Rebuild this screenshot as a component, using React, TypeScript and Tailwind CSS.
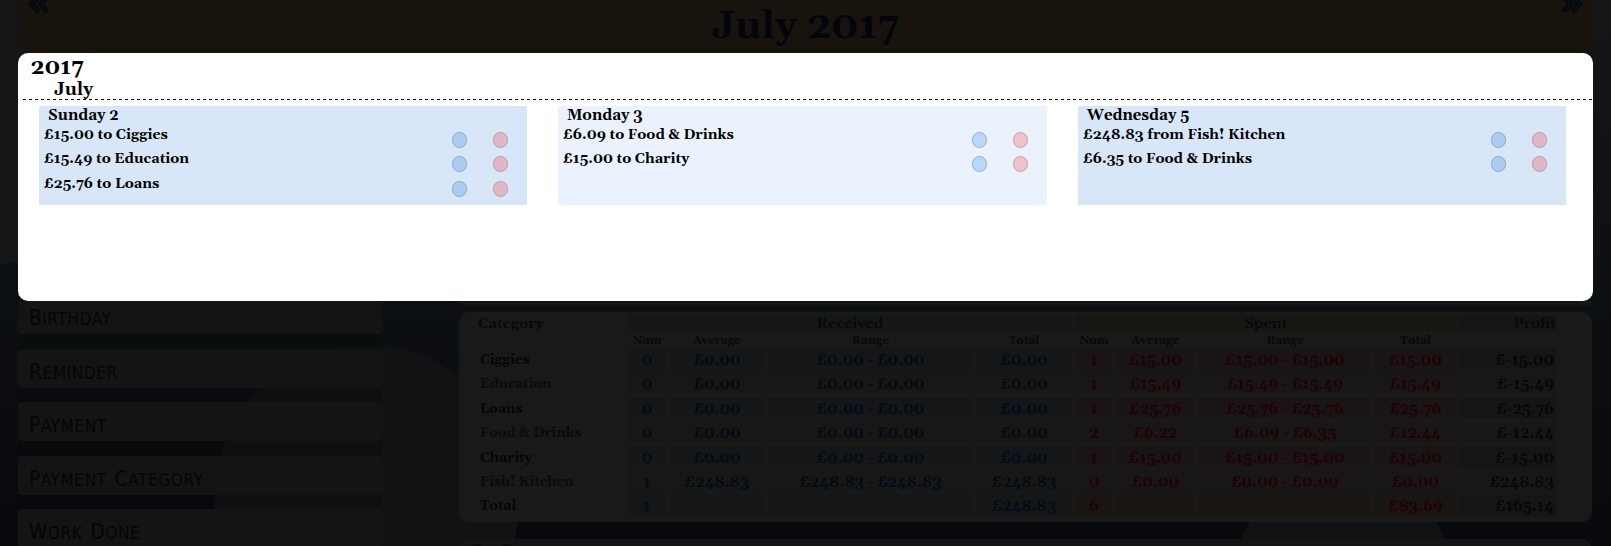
type Day = { title: string; payments: string[]; shade: string; width: string; blue: string; red: string };

const strong = {
  shade: 'bg-[#d8e7f8]',
  width: 'w-[488px]',
  blue: 'border-[#86a9cd] bg-[#accdef]',
  red: 'border-[#bd98a7] bg-[#e0b8c5]',
};
const light = {
  shade: 'bg-[#eaf3fd]',
  width: 'w-[489px]',
  blue: 'border-[#94b0cf] bg-[#bad7f5]',
  red: 'border-[#cba0a9] bg-[#efc2ca]',
};

const days: Day[] = [
  { title: 'Sunday 2', payments: ['£15.00 to Ciggies', '£15.49 to Education', '£25.76 to Loans'], ...strong },
  { title: 'Monday 3', payments: ['£6.09 to Food & Drinks', '£15.00 to Charity'], ...light },
  { title: 'Wednesday 5', payments: ['£248.83 from Fish! Kitchen', '£6.35 to Food & Drinks'], ...strong },
];

const menu = ['Birthday', 'Reminder', 'Payment', 'Payment Category', 'Work Done'];

const rows: string[][] = [
  ['Ciggies', '0', '£0.00', '£0.00 - £0.00', '£0.00', '1', '£15.00', '£15.00 - £15.00', '£15.00', '£-15.00'],
  ['Education', '0', '£0.00', '£0.00 - £0.00', '£0.00', '1', '£15.49', '£15.49 - £15.49', '£15.49', '£-15.49'],
  ['Loans', '0', '£0.00', '£0.00 - £0.00', '£0.00', '1', '£25.76', '£25.76 - £25.76', '£25.76', '£-25.76'],
  ['Food & Drinks', '0', '£0.00', '£0.00 - £0.00', '£0.00', '2', '£6.22', '£6.09 - £6.35', '£12.44', '£-12.44'],
  ['Charity', '0', '£0.00', '£0.00 - £0.00', '£0.00', '1', '£15.00', '£15.00 - £15.00', '£15.00', '£-15.00'],
  ['Fish! Kitchen', '1', '£248.83', '£248.83 - £248.83', '£248.83', '0', '£0.00', '£0.00 - £0.00', '£0.00', '£248.83'],
  ['Total', '1', '', '', '£248.83', '6', '', '', '£83.69', '£165.14'],
];

const columns = 'grid grid-cols-[169px_40px_100px_207px_100px_40px_83px_176px_85px_97px]';

function cellStyle(row: number, col: number) {
  const odd = row % 2 === 0;
  if (col <= 4) return odd ? 'bg-[#141617] text-[#020b17]' : 'bg-[#171716] text-[#020b17]';
  if (col <= 8) {
    if (row === 6) return 'bg-[#191612] text-[#1f0204]';
    return odd ? 'bg-[#191415] text-[#1f0204]' : 'bg-[#181716] text-[#1f0204]';
  }
  return odd ? 'bg-[#151515] text-[#070707]' : 'bg-[#171716] text-[#070707]';
}

function Background() {
  return (
    <svg className="absolute inset-0 h-[546px] w-[1611px]" viewBox="0 0 1611 546" aria-hidden="true">
      <circle cx="367" cy="498" r="153" fill="#111214" />
      <rect x="18" y="301" width="364" height="245" fill="#000" opacity="0.12" />
      <circle cx="1343" cy="583" r="111" fill="#101113" />
      <circle cx="-30" cy="110" r="158" fill="#151618" />
    </svg>
  );
}

function Chevrons({ flip }: { flip?: boolean }) {
  return (
    <svg
      className={`-mt-[9px] h-[22px] w-[24px] ${flip ? '-scale-x-100' : ''}`}
      viewBox="0 0 24 22"
      fill="none"
      strokeLinecap="round"
      strokeLinejoin="round"
      aria-hidden="true"
    >
      <path d="M11 6 4.500 13 10 19M20 6 13.500 13 19 19" stroke="#07080d" strokeWidth="5.500" />
      <path d="M11 6 4.500 13 10 19M20 6 13.500 13 19 19" stroke="#0a0c14" strokeWidth="2.500" />
    </svg>
  );
}

function MenuItem({ label }: { label: string }) {
  return (
    <li className="flex h-[39px] shrink-0 items-baseline gap-[8px] rounded-[4px] bg-[#131413] pl-[11px] pt-[8px] font-['DejaVu_Sans_Condensed','DejaVu_Sans',sans-serif] font-normal uppercase leading-[31px] text-[#060606]">
      {label.split(' ').map((word) => (
        <span key={word} className="text-[17.2px] tracking-[0.55px] first-letter:text-[20.5px]">
          {word}
        </span>
      ))}
    </li>
  );
}

function DayCard({ day }: { day: Day }) {
  return (
    <section className={`h-[99px] shrink-0 ${day.width} ${day.shade}`}>
      <h3 className="h-[21px] pl-[9px] pt-px text-[15px] leading-[18px]">{day.title}</h3>
      {day.payments.map((p) => (
        <div key={p} className="flex h-[24.4px] pl-[5px] text-[14.23px]">
          <span className="grow pt-px leading-[15px]">{p}</span>
          <span className={`mr-[26px] mt-[5px] h-[16px] w-[15px] rounded-full border ${day.blue}`} />
          <span className={`mr-[19px] mt-[5px] h-[16px] w-[15px] rounded-full border ${day.red}`} />
        </div>
      ))}
    </section>
  );
}

function Summary() {
  return (
    <section className="h-[210px] shrink-0 rounded-[10px] bg-[#181918] pt-[3px]">
      <div className="grid h-[17px] grid-cols-[169px_447px_384px_97px] text-[14.4px] leading-[18px] text-[#090909]">
        <div className="h-[16px] pl-[19px]">Category</div>
        <div className="mr-[3px] h-[16px] bg-[#141617] text-center">Received</div>
        <div className="mr-[2px] h-[16px] bg-[#181612] text-center">Spent</div>
        <div className="h-[16px] bg-[#151515] text-right">Profit</div>
      </div>
      <div className={`${columns} h-[16px] text-center text-[11.5px] leading-[17px] text-[#090909]`}>
        {['', 'Num', 'Average', 'Range', 'Total', 'Num', 'Average', 'Range', 'Total', ''].map((h, i) => (
          <div key={i} className="mr-[2px]">{h}</div>
        ))}
      </div>
      {rows.map((row, r) => (
        <div key={row[0]} className={`${columns} h-[24.4px] text-center text-[15.1px] leading-[25px]`}>
          <div className={`pl-[21px] text-left text-[13.6px] leading-[24px] ${r % 2 ? 'text-[#0b0b0b]' : 'text-[#060606]'}`}>
            {row[0]}
          </div>
          {row.slice(1).map((value, i) => (
            <div key={i} className={`h-[22px] ${i === 8 ? 'pr-[2px] text-right' : 'mr-[2px]'} ${cellStyle(r, i + 1)}`}>
              {value}
            </div>
          ))}
        </div>
      ))}
    </section>
  );
}

export default function App() {
  return (
    <div className="relative h-[546px] w-[1611px] overflow-hidden bg-linear-to-b from-[#131517] via-[#0d1012] via-55% to-[#08090d] font-['Gelasio','Liberation_Serif',serif] font-bold text-black">
      <Background />
      <div className="relative flex flex-col px-[18px]">
        <header className="flex h-[53px] items-start justify-between rounded-b-[10px] bg-[#18130c] px-[9px] text-[#03050d]">
          <Chevrons />
          <h1 className="text-[39px] leading-[53px]">July 2017</h1>
          <Chevrons flip />
        </header>

        <main className="h-[248px] rounded-[10px] bg-white">
          <div className="ml-[5px] flex h-[46px] flex-col pt-[3px]">
            <h2 className="h-[22px] pl-[7.5px] text-[22.4px] leading-[23px]">2017</h2>
            <h2 className="h-[21px] pl-[31px] text-[18px] leading-[23px]">July</h2>
          </div>
          <div className="ml-[5px] h-px bg-[repeating-linear-gradient(90deg,#000_0_3px,transparent_3px_6px)]" />
          <div className="flex gap-[31px] pl-[21px] pt-[6px]">
            {days.map((d) => (
              <DayCard key={d.title} day={d} />
            ))}
          </div>
        </main>

        <div className="flex h-[245px] justify-between overflow-hidden">
          <ul className="-mt-[6px] flex w-[364px] flex-col gap-[14.6px]">
            {menu.map((m) => (
              <MenuItem key={m} label={m} />
            ))}
          </ul>
          <div className="mr-px flex w-[1133px] flex-col">
            <div className="mb-[6px] h-[5px] shrink-0 rounded-b-[10px] bg-[#141614]" />
            <Summary />
            <div className="mt-[17px] flex h-[30px] shrink-0 gap-[14px] rounded-t-[10px] bg-[#151413] pl-[10px] pt-[5px]">
              <span className="h-[20px] w-[16px] rounded-t-full bg-[#0e0d10]" />
              <span className="h-[20px] w-[16px] rounded-t-full bg-[#0e0d10]" />
            </div>
          </div>
        </div>
      </div>
    </div>
  );
}
